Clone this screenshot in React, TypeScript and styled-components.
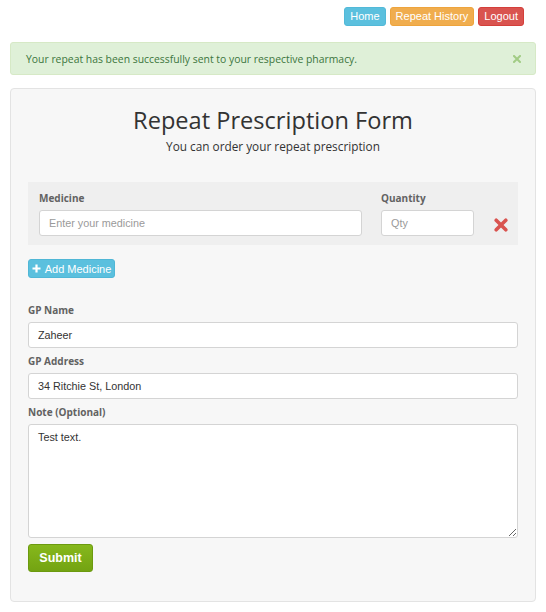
import React from "react";
import styled, { createGlobalStyle } from "styled-components";

const Global = createGlobalStyle`
  html, body { margin: 0; padding: 0; background: #ffffff; }
  body { font-family: "Open Sans", "Liberation Sans", sans-serif; color: #333; }
  * { box-sizing: border-box; }
`;

const Page = styled.div`
  width: 546px;
  display: flex;
  flex-direction: column;
`;

const Nav = styled.nav`
  display: flex;
  justify-content: flex-end;
  gap: 4px;
  padding: 7px 22px 0 0;
`;

const NavButton = styled.button<{ $bg: string; $border: string }>`
  height: 19px;
  padding: 0 5px;
  border: 1px solid ${(p) => p.$border};
  border-radius: 3px;
  background: ${(p) => p.$bg};
  color: #fff;
  font-family: "Liberation Sans", Arial, sans-serif;
  font-size: 11px;
  line-height: 17px;
  cursor: pointer;
`;

const Alert = styled.div`
  margin: 16px 10px 0;
  height: 33px;
  padding: 0 14px 0 15px;
  display: flex;
  align-items: center;
  justify-content: space-between;
  background: #dff0d8;
  border: 1px solid #d6e9c6;
  border-radius: 3px;
  color: #3c763d;
  font-size: 10.4px;
`;

const CloseIcon = styled.svg`
  width: 8px;
  height: 8px;
`;

const Panel = styled.div`
  margin: 13px 10px 10px;
  padding: 15px 17px 29px;
  background: #f7f7f7;
  border: 1px solid #e3e3e3;
  border-radius: 4px;
  display: flex;
  flex-direction: column;
`;

const Title = styled.h1`
  margin: 0;
  text-align: center;
  font-weight: 400;
  font-size: 23.6px;
  line-height: 32px;
  color: #333;
`;

const Subtitle = styled.p`
  margin: 1px 0 0;
  text-align: center;
  font-size: 11.8px;
  line-height: 18px;
  color: #333;
`;

const MedicineBox = styled.div`
  margin-top: 27px;
  background: #efefef;
  padding: 9px 10px 9px 11px;
  display: grid;
  grid-template-columns: 323px 93px 1fr;
  column-gap: 19px;
  row-gap: 5px;
  align-items: center;
`;

const Label = styled.label`
  display: block;
  font-weight: 700;
  font-size: 10px;
  line-height: 14px;
  color: #626262;
`;

const Input = styled.input`
  width: 100%;
  height: 26px;
  padding: 0 9px;
  border: 1px solid #d4d4d4;
  border-radius: 3px;
  background: #fff;
  font-family: "Liberation Sans", Arial, sans-serif;
  font-size: 10.8px;
  color: #333;
  outline: none;
  &::placeholder { color: #9a9a9a; }
`;

const RemoveIcon = styled.svg`
  width: 14px;
  height: 14px;
  justify-self: start;
  margin-left: 1px;
  margin-top: 3px;
`;

const AddButton = styled.button`
  align-self: flex-start;
  margin-top: 14px;
  height: 19px;
  width: 87px;
  padding: 0;
  display: flex;
  align-items: center;
  justify-content: center;
  gap: 4px;
  border: 1px solid #50b7d6;
  border-radius: 3px;
  background: #5bc0de;
  color: #fff;
  font-family: "Liberation Sans", Arial, sans-serif;
  font-size: 11px;
  cursor: pointer;
`;

const Fields = styled.div`
  margin-top: 25px;
  display: flex;
  flex-direction: column;
  gap: 6px;
`;

const Group = styled.div`
  display: flex;
  flex-direction: column;
  gap: 5px;
`;

const TextArea = styled.textarea`
  width: 100%;
  height: 114px;
  padding: 6px 9px;
  border: 1px solid #d4d4d4;
  border-radius: 3px;
  background: #fff;
  font-family: "Liberation Sans", Arial, sans-serif;
  font-size: 10.8px;
  color: #333;
  resize: vertical;
  outline: none;
`;

const SubmitButton = styled.button`
  align-self: flex-start;
  margin-top: 6px;
  height: 28px;
  width: 65px;
  padding: 0;
  border: 1px solid #6c9a0f;
  border-radius: 3px;
  background: linear-gradient(#86b81c, #73a312);
  color: #fff;
  font-family: "Liberation Sans", Arial, sans-serif;
  font-weight: 700;
  font-size: 12.5px;
  cursor: pointer;
`;

export default function App() {
  return (
    <Page>
      <Global />
      <Nav>
        <NavButton $bg="#5bc0de" $border="#52b9d8">Home</NavButton>
        <NavButton $bg="#f0ad4e" $border="#eea43c">Repeat History</NavButton>
        <NavButton $bg="#d9534f" $border="#d43f3a">Logout</NavButton>
      </Nav>
      <Alert>
        <span>Your repeat has been successfully sent to your respective pharmacy.</span>
        <CloseIcon viewBox="0 0 8 8">
          <path d="M1 1 L7 7 M7 1 L1 7" stroke="#a2cc85" strokeWidth="2" strokeLinecap="square" />
        </CloseIcon>
      </Alert>
      <Panel>
        <Title>Repeat Prescription Form</Title>
        <Subtitle>You can order your repeat prescription</Subtitle>
        <MedicineBox>
          <Label>Medicine</Label>
          <Label>Quantity</Label>
          <span />
          <Input placeholder="Enter your medicine" />
          <Input placeholder="Qty" />
          <RemoveIcon viewBox="0 0 14 14">
            <path d="M2.2 2.2 L11.8 11.8 M11.8 2.2 L2.2 11.8" stroke="#d9534f" strokeWidth="3.6" strokeLinecap="round" />
          </RemoveIcon>
        </MedicineBox>
        <AddButton>
          <svg width="9" height="9" viewBox="0 0 9 9">
            <path d="M4.5 0.5 V8.5 M0.5 4.5 H8.5" stroke="#fff" strokeWidth="2.2" />
          </svg>
          Add Medicine
        </AddButton>
        <Fields>
          <Group>
            <Label>GP Name</Label>
            <Input defaultValue="Zaheer" />
          </Group>
          <Group>
            <Label>GP Address</Label>
            <Input defaultValue="34 Ritchie St, London" />
          </Group>
          <Group>
            <Label>Note (Optional)</Label>
            <TextArea defaultValue="Test text." />
          </Group>
        </Fields>
        <SubmitButton>Submit</SubmitButton>
      </Panel>
    </Page>
  );
}
